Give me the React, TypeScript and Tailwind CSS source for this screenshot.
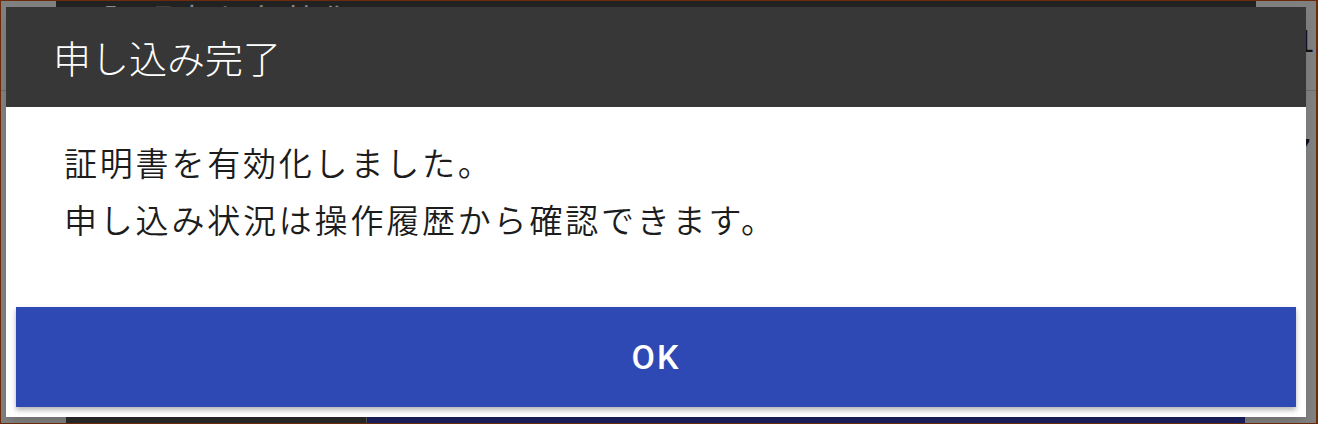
import React from "react";

const JP = { fontFamily: '"Noto Sans CJK JP", "Noto Sans", sans-serif' };

export default function App() {
  return (
    <div
      className="relative w-[1318px] h-[424px] overflow-hidden border-t border-l border-b border-r-2 border-[#6b2a0c] bg-[#808080]"
      style={JP}
    >
      {/* ── dimmed page behind the dialog ── */}
      <div className="flex flex-col h-full">
        <div className="flex h-[89px]">
          <div className="w-[55px]" />
          <div className="w-[1200px] bg-[#222222] pl-[47px] pt-[2px] overflow-hidden">
            <p className="text-[34px] leading-none text-[#8a8a8a] tracking-[2px]">証明書を有効化</p>
          </div>
          <div className="flex-1 flex justify-end pr-[2px] pt-[24px]">
            <span className="text-[32px] leading-none text-[#111]" style={{ fontFamily: '"Liberation Sans", sans-serif' }}>1</span>
          </div>
        </div>
        <div className="h-px bg-[#6e6e6e]" />
        <div className="flex-1 flex justify-end pr-[5px] pt-[42px]">
          <span className="text-[34px] leading-none text-[#111]" style={{ fontFamily: '"Liberation Sans", sans-serif' }}>7</span>
        </div>
        <div className="flex h-[30px]">
          <div className="w-[65px]" />
          <div className="w-[300px] bg-[#2a2a2a]" />
          <div className="w-px bg-[#555]" />
          <div className="w-[878px] bg-[#1b2160]" />
        </div>
      </div>

      {/* ── DIALOG ── */}
      <div className="absolute left-[5px] top-[6px] w-[1300px] h-[410px] bg-white flex flex-col shadow-lg">
        <div className="h-[100px] bg-[#373737] flex items-center pl-[47px] pb-[1px]">
          <h2 className="text-[38px] leading-none text-white font-light">申し込み完了</h2>
        </div>

        <div className="pl-[58px] pt-[27px] text-[33px] leading-[57px] text-[#1c1c1c] tracking-[2.8px] font-[350]">
          <p>証明書を有効化しました。</p>
          <p>申し込み状況は操作履歴から確認できます。</p>
        </div>

        <button
          className="mt-auto mx-[10px] mb-[10px] h-[100px] bg-[#2f49b4] text-white text-[34px] font-medium tracking-[2px] shadow-[0_3px_5px_rgba(0,0,0,0.3)]"
          style={{ fontFamily: "Roboto, sans-serif" }}
        >
          OK
        </button>
      </div>
    </div>
  );
}
